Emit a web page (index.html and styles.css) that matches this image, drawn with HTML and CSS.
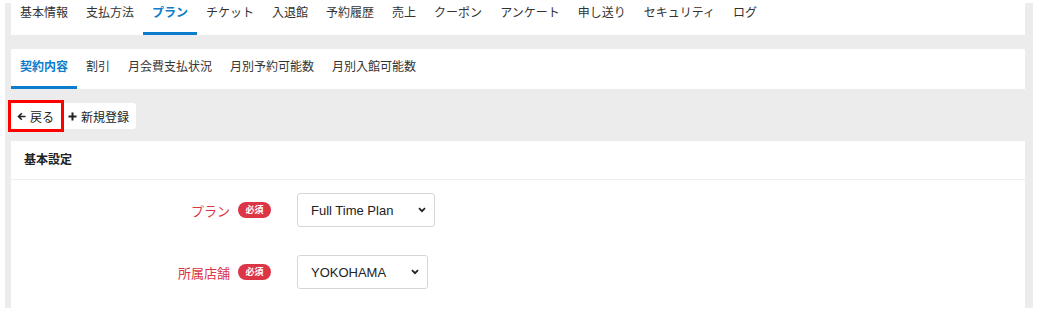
FILE: index.html
```html
<!DOCTYPE html>
<html lang="ja">

<head>
    <meta charset="UTF-8">
    <meta name="viewport" content="width=device-width, initial-scale=1.0">
    <title>プラン</title>
    <link rel="stylesheet" href="styles.css">
</head>

<body>
    <div class="page">
        <div class="tabs tabs-top">
            <a class="tab">基本情報</a>
            <a class="tab">支払方法</a>
            <a class="tab active">プラン</a>
            <a class="tab">チケット</a>
            <a class="tab">入退館</a>
            <a class="tab">予約履歴</a>
            <a class="tab">売上</a>
            <a class="tab">クーポン</a>
            <a class="tab">アンケート</a>
            <a class="tab">申し送り</a>
            <a class="tab">セキュリティ</a>
            <a class="tab">ログ</a>
        </div>

        <div class="tabs tabs-sub">
            <a class="tab active">契約内容</a>
            <a class="tab">割引</a>
            <a class="tab">月会費支払状況</a>
            <a class="tab">月別予約可能数</a>
            <a class="tab">月別入館可能数</a>
        </div>

        <div class="toolbar">
            <button class="btn btn-back">
                <svg width="9" height="9" viewBox="0 0 9 9"><path d="M8.5 4.5H1.5M4.8 1.2L1.5 4.5l3.3 3.3" fill="none" stroke="#222" stroke-width="1.6"/></svg>
                戻る
            </button>
            <button class="btn">
                <svg width="9" height="9" viewBox="0 0 9 9"><path d="M4.5 0.5v8M0.5 4.5h8" fill="none" stroke="#222" stroke-width="2"/></svg>
                新規登録
            </button>
        </div>

        <div class="card">
            <div class="card-header">基本設定</div>
            <div class="card-body">
                <div class="form-row">
                    <div class="label-col">
                        <label class="form-label">プラン</label>
                        <span class="badge">必須</span>
                    </div>
                    <div class="select-wrap">
                        <select class="select">
                            <option>Full Time Plan</option>
                        </select>
                        <svg class="chevron" width="8" height="6" viewBox="0 0 8 6"><path d="M1 1.2l3 3 3-3" fill="none" stroke="#222" stroke-width="1.8"/></svg>
                    </div>
                </div>
                <div class="form-row">
                    <div class="label-col">
                        <label class="form-label">所属店舗</label>
                        <span class="badge">必須</span>
                    </div>
                    <div class="select-wrap">
                        <select class="select">
                            <option>YOKOHAMA</option>
                        </select>
                        <svg class="chevron" width="8" height="6" viewBox="0 0 8 6"><path d="M1 1.2l3 3 3-3" fill="none" stroke="#222" stroke-width="1.8"/></svg>
                    </div>
                </div>
            </div>
        </div>
    </div>
</body>

</html>
```

FILE: styles.css
```css
body {
    margin: 0;
    background: #fff;
    font-family: "Liberation Sans", "Noto Sans CJK JP", sans-serif;
    color: #333;
}

.page {
    margin: 3px 6px 0 5px;
    padding: 0 8px 0 6px;
    background: #ececec;
}

.tabs {
    display: flex;
    background: #fff;
    font-size: 12px;
}

.tab {
    padding: 0 9px;
    border-bottom: 3px solid transparent;
    color: #333;
    white-space: nowrap;
}

.tab.active {
    color: #0b7dcc;
    font-weight: bold;
    border-bottom-color: #0b7dcc;
}

.tabs-top .tab {
    height: 29px;
    line-height: 20px;
}

.tabs-sub {
    margin-top: 14px;
}

.tabs-sub .tab {
    height: 37px;
    line-height: 37px;
}

.toolbar {
    display: flex;
    padding: 14px 0 12px 0;
}

.btn {
    display: flex;
    align-items: center;
    gap: 4px;
    height: 26px;
    padding: 0 7px;
    border: none;
    border-radius: 3px;
    background: #fff;
    font-family: "Liberation Sans", "Noto Sans CJK JP", sans-serif;
    font-size: 12px;
    color: #222;
}

.btn-back {
    position: relative;
    z-index: 1;
    padding-left: 6px;
    outline: 3px solid #f00;
    outline-offset: 0;
    border-radius: 0;
}

.card {
    background: #fff;
}

.card-header {
    height: 38px;
    line-height: 38px;
    padding-left: 13px;
    font-size: 12px;
    font-weight: bold;
    color: #222;
    border-bottom: 1px solid #eee;
}

.card-body {
    padding: 13px 0 19px 0;
}

.form-row {
    display: flex;
    align-items: center;
    margin-bottom: 28px;
}

.form-row:last-child {
    margin-bottom: 0;
}

.label-col {
    width: 260px;
    display: flex;
    justify-content: flex-end;
    align-items: center;
    gap: 8px;
    margin-right: 26px;
}

.form-label {
    font-size: 13px;
    color: #dc3545;
}

.badge {
    width: 33px;
    height: 16px;
    line-height: 16px;
    border-radius: 8px;
    background: #dc3545;
    color: #fff;
    font-size: 9px;
    font-weight: bold;
    text-align: center;
}

.select-wrap {
    position: relative;
    display: inline-block;
}

.select {
    appearance: none;
    -webkit-appearance: none;
    height: 34px;
    padding: 0 40px 0 13px;
    border: 1px solid #d6d6d6;
    border-radius: 3px;
    background: #fff;
    font-family: "Liberation Sans", "Noto Sans CJK JP", sans-serif;
    font-size: 13px;
    color: #222;
}

.chevron {
    position: absolute;
    right: 9px;
    top: 14px;
}
```
